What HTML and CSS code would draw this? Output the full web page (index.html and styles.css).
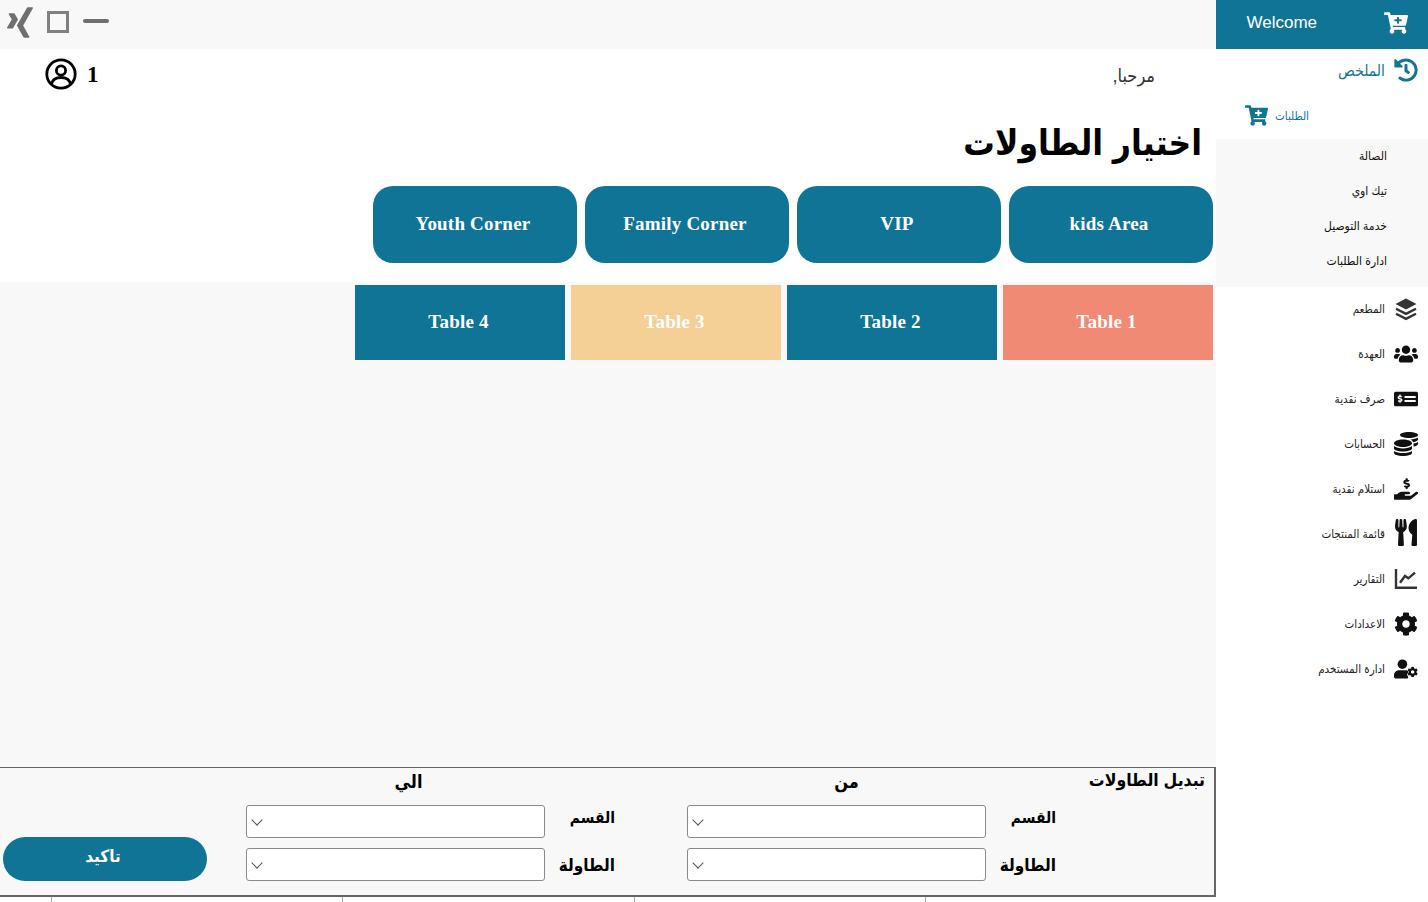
FILE: index.html
```html
<!DOCTYPE html>
<html lang="ar" dir="rtl">
<head>
  <meta charset="UTF-8">
  <meta name="viewport" content="width=device-width, initial-scale=1.0">
  <title>اختيار الطاولات</title>
  <link rel="stylesheet" href="styles.css">
</head>
<body>
  <svg class="sprites" xmlns="http://www.w3.org/2000/svg">
    <symbol id="i-cart" viewBox="0 0 576 512"><path d="M504.717 320H211.572l6.545 32h268.418c15.401 0 26.816 14.301 23.403 29.319l-5.517 24.276C523.112 414.668 536 433.828 536 456c0 31.202-25.519 56.444-56.824 55.994-29.823-.429-54.35-24.631-55.155-54.447-.44-16.287 6.085-31.049 16.803-41.548H231.176C241.553 426.165 248 440.326 248 456c0 31.813-26.528 57.431-58.67 55.938-28.54-1.325-51.751-24.385-53.251-52.917-1.158-22.034 10.436-41.455 28.051-51.586L93.883 64H24C10.745 64 0 53.255 0 40V24C0 10.745 10.745 0 24 0h102.529c11.401 0 21.228 8.021 23.513 19.19L159.208 64H551.99c15.401 0 26.816 14.301 23.403 29.319l-47.273 208C525.637 312.246 515.923 320 504.717 320zM408 168h-48v-40c0-8.837-7.163-16-16-16h-16c-8.837 0-16 7.163-16 16v40h-48c-8.837 0-16 7.163-16 16v16c0 8.837 7.163 16 16 16h48v40c0 8.837 7.163 16 16 16h16c8.837 0 16-7.163 16-16v-40h48c8.837 0 16-7.163 16-16v-16c0-8.837-7.163-16-16-16z"/></symbol>
    <symbol id="i-cog" viewBox="0 0 512 512"><path d="M487.4 315.7l-42.6-24.6c4.3-23.2 4.3-47 0-70.2l42.6-24.6c4.9-2.8 7.1-8.6 5.5-14-11.1-35.6-30-67.8-54.7-94.6-3.8-4.1-10-5.1-14.8-2.3L380.8 110c-17.9-15.4-38.5-27.3-60.8-35.1V25.8c0-5.6-3.9-10.5-9.4-11.7-36.7-8.2-74.3-7.8-109.2 0-5.5 1.2-9.4 6.1-9.4 11.7V75c-22.2 7.9-42.8 19.8-60.8 35.1L88.7 85.5c-4.9-2.8-11-1.9-14.8 2.3-24.7 26.7-43.6 58.9-54.7 94.6-1.7 5.4.6 11.2 5.5 14L67.3 221c-4.3 23.2-4.3 47 0 70.2l-42.6 24.6c-4.9 2.8-7.1 8.6-5.5 14 11.1 35.6 30 67.8 54.7 94.6 3.8 4.1 10 5.1 14.8 2.3l42.6-24.6c17.9 15.4 38.5 27.3 60.8 35.1v49.2c0 5.6 3.9 10.5 9.4 11.7 36.7 8.2 74.3 7.8 109.2 0 5.5-1.2 9.4-6.1 9.4-11.7v-49.2c22.2-7.9 42.8-19.8 60.8-35.1l42.6 24.6c4.9 2.8 11 1.9 14.8-2.3 24.7-26.7 43.6-58.9 54.7-94.6 1.5-5.5-.7-11.3-5.6-14.1zM256 336c-44.1 0-80-35.9-80-80s35.9-80 80-80 80 35.9 80 80-35.9 80-80 80z"/></symbol>
  </svg>

  <div class="shell">
    <aside class="sidebar">
      <div class="side-head">
        <svg class="cart-head"><use href="#i-cart"/></svg>
        <span class="welcome" dir="ltr">Welcome</span>
      </div>

      <div class="side-link side-link-active">
        <svg class="side-icon" viewBox="0 0 512 512"><path d="M504 255.531c.253 136.64-111.18 248.372-247.82 248.468-59.015.042-113.223-20.53-155.822-54.911-11.077-8.94-11.905-25.541-1.839-35.607l11.267-11.267c8.609-8.609 22.353-9.551 31.891-1.984C173.062 425.135 212.781 440 256 440c101.705 0 184-82.311 184-184 0-101.705-82.311-184-184-184-48.814 0-93.149 18.969-126.068 49.932l50.754 50.754c10.08 10.08 2.941 27.314-11.313 27.314H24c-8.837 0-16-7.163-16-16V38.627c0-14.254 17.234-21.393 27.314-11.314l49.372 49.372C129.209 34.136 189.552 8 256 8c136.81 0 247.747 110.78 248 247.531zm-180.912 78.784l9.823-12.63c8.138-10.463 6.253-25.542-4.21-33.679L288 256.349V152c0-13.255-10.745-24-24-24h-16c-13.255 0-24 10.745-24 24v135.651l65.409 50.874c10.463 8.137 25.541 6.253 33.679-4.21z"/></svg>
        <span class="side-text-lg">الملخص</span>
      </div>

      <div class="orders-link">
        <span>الطلبات</span>
        <svg class="orders-cart"><use href="#i-cart"/></svg>
      </div>

      <ul class="sub-menu">
        <li>الصالة</li>
        <li>تيك اوي</li>
        <li>خدمة التوصيل</li>
        <li>ادارة الطلبات</li>
      </ul>

      <nav class="side-nav">
        <div class="side-link">
          <svg class="side-icon layers-icon" viewBox="0 0 24 24"><path class="layer-top" d="M12 1.500L22.500 7 12 12.500 1.500 7z"/><path d="M2 11.800l10 5 10-5M2 16.800l10 5 10-5"/></svg>
          <span>المطعم</span>
        </div>
        <div class="side-link">
          <svg class="side-icon" viewBox="0 0 640 512"><path d="M96 224c35.3 0 64-28.7 64-64s-28.7-64-64-64-64 28.7-64 64 28.7 64 64 64zm448 0c35.3 0 64-28.7 64-64s-28.7-64-64-64-64 28.7-64 64 28.7 64 64 64zm32 32h-64c-17.6 0-33.5 7.1-45.1 18.6 40.3 22.1 68.9 62 75.1 109.4h66c17.7 0 32-14.3 32-32v-32c0-35.3-28.7-64-64-64zm-256 0c61.9 0 112-50.1 112-112S381.9 32 320 32 208 82.1 208 144s50.1 112 112 112zm76.8 32h-8.3c-20.8 10-43.9 16-68.5 16s-47.6-6-68.5-16h-8.3C179.6 288 128 339.6 128 403.2V432c0 26.5 21.5 48 48 48h288c26.5 0 48-21.5 48-48v-28.8c0-63.6-51.6-115.2-115.2-115.2zm-223.7-13.4C161.5 263.1 145.6 256 128 256H64c-35.3 0-64 28.7-64 64v32c0 17.7 14.3 32 32 32h65.9c6.3-47.4 34.9-87.3 75.2-109.4z"/></svg>
          <span>العهدة</span>
        </div>
        <div class="side-link">
          <svg class="side-icon" viewBox="0 0 640 512">
            <rect y="64" width="640" height="384" rx="40"/>
            <path class="money-mark" d="M176 327.88V344c0 4.42-3.58 8-8 8h-16c-4.42 0-8-3.58-8-8v-16.29c-11.29-.58-22.27-4.52-31.37-11.35-3.9-2.93-4.1-8.77-.57-12.14l11.75-11.21c2.77-2.64 6.89-2.76 10.13-.73 3.87 2.42 8.26 3.72 12.82 3.72h28.11c6.5 0 11.8-5.92 11.8-13.19 0-5.95-3.61-11.19-8.77-12.73l-45-13.5c-18.59-5.58-31.58-23.42-31.58-43.39 0-24.52 19.05-44.44 42.67-45.07V152c0-4.42 3.58-8 8-8h16c4.42 0 8 3.58 8 8v16.29c11.29.58 22.27 4.51 31.37 11.35 3.9 2.93 4.1 8.77.57 12.14l-11.75 11.21c-2.77 2.64-6.89 2.76-10.13.73-3.87-2.43-8.26-3.72-12.82-3.72h-28.11c-6.5 0-11.8 5.92-11.8 13.19 0 5.95 3.61 11.19 8.77 12.73l45 13.5c18.59 5.58 31.58 23.42 31.58 43.39 0 24.53-19.05 44.44-42.67 45.07z"/>
            <rect class="money-line" x="280" y="176" width="300" height="56" rx="8"/>
            <rect class="money-line" x="280" y="280" width="300" height="56" rx="8"/>
          </svg>
          <span>صرف نقدية</span>
        </div>
        <div class="side-link">
          <svg class="side-icon" viewBox="0 0 512 512"><path d="M0 405.3V448c0 35.3 86 64 192 64s192-28.7 192-64v-42.7C342.7 434.4 267.2 448 192 448S41.3 434.4 0 405.3zM320 128c106 0 192-28.7 192-64S426 0 320 0 128 28.7 128 64s86 64 192 64zM0 300.4V352c0 35.3 86 64 192 64s192-28.7 192-64v-51.6c-41.3 34-116.9 51.6-192 51.6S41.3 334.4 0 300.4zm416 11c57.3-11.1 96-31.7 96-55.4v-42.7c-23.2 16.4-57.3 27.6-96 34.5v63.6zM192 160C86 160 0 195.8 0 240s86 80 192 80 192-35.8 192-80-86-80-192-80zm219.3 56.3c60-10.8 100.7-32 100.7-56.3v-42.7c-35.5 25.1-96.5 38.6-160.7 41.8 29.5 14.3 51.2 33.5 60 57.2z"/></svg>
          <span>الحسابات</span>
        </div>
        <div class="side-link">
          <svg class="side-icon" viewBox="0 0 576 512"><path d="M271.06,144.3l54.27,14.3a8.59,8.59,0,0,1,6.63,8.1c0,4.6-4.09,8.4-9.12,8.4h-35.6a30,30,0,0,1-11.19-2.2c-5.24-2.2-11.28-1.7-15.3,2l-19,17.5a11.68,11.68,0,0,0-2.25,2.66,11.42,11.42,0,0,0,3.88,15.74,83.77,83.77,0,0,0,34.51,11.5V240c0,8.8,7.83,16,17.37,16h17.37c9.55,0,17.38-7.2,17.38-16V222.4c32.93-3.6,57.84-31,53.5-63-3.15-23-22.46-41.3-46.56-47.7L282.68,97.4a8.59,8.59,0,0,1-6.63-8.1c0-4.6,4.09-8.4,9.12-8.4h35.6A30,30,0,0,1,332,83.1c5.23,2.2,11.28,1.7,15.3-2l19-17.5A11.31,11.31,0,0,0,368.47,61a11.43,11.43,0,0,0-3.84-15.78,83.82,83.82,0,0,0-34.52-11.5V16c0-8.8-7.82-16-17.37-16H295.37C285.82,0,278,7.2,278,16V33.6c-32.89,3.6-57.85,31-53.51,63C227.63,119.6,247,137.9,271.06,144.3ZM565.27,328.1c-11.8-10.7-30.2-10-42.6,0L430.27,402a63.64,63.64,0,0,1-40,14H272a16,16,0,0,1,0-32h78.29c15.9,0,30.71-10.9,33.25-26.6a31.2,31.2,0,0,0,.46-5.46A32,32,0,0,0,352,320H192a117.66,117.66,0,0,0-74.1,26.29L71.4,384H16A16,16,0,0,0,0,400v96a16,16,0,0,0,16,16H372.77a64,64,0,0,0,40-14L564,377a32,32,0,0,0,1.28-48.9Z"/></svg>
          <span>استلام نقدية</span>
        </div>
        <div class="side-link">
          <svg class="side-icon utensils-icon" viewBox="0 0 416 512"><path d="M207.9 15.2c.8 4.7 16.1 94.5 16.1 128.8 0 52.3-27.8 89.6-68.9 104.6L168 486.7c.7 13.7-10.2 25.3-24 25.3H80c-13.7 0-24.7-11.5-24-25.3l12.9-238.1C27.7 233.6 0 196.2 0 144 0 109.6 15.3 19.9 16.1 15.2 19.3-5.1 61.4-5.4 64 16.3v141.2c1.3 3.4 15.1 3.2 16 0 1.4-25.3 7.9-139.2 8-141.8 3.3-20.8 44.7-20.8 47.9 0 .2 2.7 6.6 116.5 8 141.8.9 3.2 14.8 3.4 16 0V16.3c2.6-21.6 44.8-21.4 48-1.1zm119.2 285.7l-15 185.1c-1.2 14 9.9 26 23.9 26h56c13.3 0 24-10.7 24-24V24c0-13.2-10.7-24-24-24-82.5 0-221.4 178.5-64.9 300.9z"/></svg>
          <span>قائمة المنتجات</span>
        </div>
        <div class="side-link">
          <svg class="side-icon chart-icon" viewBox="0 0 24 24"><path d="M2 2v18.700h21"/><path d="M6 15.700l5-6.700 3.300 2.300 6.700-5.600"/></svg>
          <span>التقارير</span>
        </div>
        <div class="side-link">
          <svg class="side-icon"><use href="#i-cog"/></svg>
          <span>الاعدادات</span>
        </div>
        <div class="side-link">
          <svg class="side-icon" viewBox="0 0 640 512">
            <circle cx="224" cy="128" r="128"/>
            <path d="M134 288h180c30 0 60 10 60 30v40c-30 30-30 70 0 100v30c0 12-8 24-24 24H48c-26 0-48-22-48-48v-41.600C0 348 60 288 134 288z"/>
            <svg x="352" y="192" width="288" height="288" viewBox="0 0 512 512"><use href="#i-cog"/></svg>
          </svg>
          <span>ادارة المستخدم</span>
        </div>
      </nav>
    </aside>

    <main class="content">
      <div class="top-bar" dir="ltr">
        <svg class="xing-icon" viewBox="0 0 384 512"><path d="M162.7 210c-1.8 3.3-25.2 44.4-70.1 123.5-4.9 8.3-10.8 12.5-17.7 12.5H9.8c-7.7 0-12.1-7.5-8.5-14.4l69-121.3c.2 0 .2-.1 0-.3l-43.9-75.6c-4.3-7.8.3-14.1 8.5-14.1H100c7.3 0 13.3 4.1 18 12.2l44.7 77.500zM382.600 46.100l-144 253v.3L330.200 466c3.900 7.100.2 14.100-8.500 14.100h-65.200c-7.600 0-13.600-4-18-12.200l-92.400-168.500c3.300-5.800 51.500-90.800 144.800-255.200 4.600-8.100 10.400-12.200 17.500-12.200h65.700c8 0 12.300 6.700 8.500 14.100z"/></svg>
        <span class="win-square"></span>
        <span class="win-minus"></span>
      </div>

      <section class="intro">
        <div class="greeting-row">
          <span class="greeting">مرحبا,</span>
          <div class="user-box" dir="ltr">
            <svg class="user-icon" viewBox="0 0 32 32">
              <circle cx="16" cy="16" r="14.200"/>
              <circle cx="16" cy="12.500" r="4.600"/>
              <path d="M6.500 26c1-4.500 5-6.500 9.500-6.500s8.500 2 9.500 6.500"/>
            </svg>
            <strong class="user-id">1</strong>
          </div>
        </div>
        <h1 class="page-title">اختيار الطاولات</h1>
        <div class="categories" dir="rtl">
          <button type="button" class="category">kids Area</button>
          <button type="button" class="category">VIP</button>
          <button type="button" class="category">Family Corner</button>
          <button type="button" class="category">Youth Corner</button>
        </div>
      </section>

      <section class="tables">
        <div class="table-card table-busy">Table 1</div>
        <div class="table-card">Table 2</div>
        <div class="table-card table-held">Table 3</div>
        <div class="table-card">Table 4</div>
      </section>

      <section class="swap-panel">
        <div class="swap-title">تبديل الطاولات</div>

        <div class="swap-group">
          <div class="swap-heading">من</div>
          <label class="swap-row">
            <span class="label-section">القسم</span>
            <span class="select-wrap"><select></select></span>
          </label>
          <label class="swap-row">
            <span class="label-table">الطاولة</span>
            <span class="select-wrap"><select></select></span>
          </label>
        </div>

        <div class="swap-group swap-group-to">
          <div class="swap-heading">الي</div>
          <label class="swap-row">
            <span class="label-section">القسم</span>
            <span class="select-wrap"><select></select></span>
          </label>
          <label class="swap-row">
            <span class="label-table">الطاولة</span>
            <span class="select-wrap"><select></select></span>
          </label>
        </div>

        <button type="button" class="confirm-btn">تاكيد</button>
      </section>

      <div class="grid-strip">
        <span></span><span></span><span></span><span></span>
      </div>
    </main>
  </div>
</body>
</html>
```

FILE: styles.css
```css
* {
  box-sizing: border-box;
}

html, body {
  margin: 0;
  padding: 0;
  height: 902px;
  overflow: hidden;
}

body {
  font-family: "Liberation Sans", "DejaVu Sans Condensed", "DejaVu Sans", sans-serif;
  background-color: #fff;
  color: #000;
}

.sprites {
  display: none;
}

.shell {
  display: flex;
  height: 902px;
}

/* sidebar */
.sidebar {
  width: 212px;
  flex-shrink: 0;
  background-color: #fff;
}

.side-head {
  height: 49px;
  background-color: #107496;
  color: #fff;
  display: flex;
  align-items: center;
  padding: 0 20px 4px 0;
}

.cart-head {
  width: 24px;
  height: 22px;
  fill: #fff;
}

.welcome {
  margin-right: 67px;
  font-size: 17px;
}

.side-link {
  height: 45px;
  display: flex;
  align-items: center;
  gap: 9px;
  padding-right: 10px;
  font-size: 11.5px;
  color: #222;
}

.side-nav {
  margin-top: -1px;
}

.side-icon {
  width: 24px;
  height: 24px;
  fill: #111;
  flex-shrink: 0;
}

.layers-icon {
  fill: none;
  stroke: #333;
  stroke-width: 2.400;
}

.layer-top {
  fill: #333;
  stroke: none;
}

.money-mark {
  fill: #fff;
  stroke: #fff;
  stroke-width: 12;
}

.money-line {
  fill: #fff;
}

.utensils-icon {
  height: 27px;
  margin-top: -2px;
}

.chart-icon {
  fill: none;
  stroke: #333;
  stroke-width: 2.400;
}

.side-link-active {
  color: #107496;
  height: 44px;
  margin-top: -1px;
}

.side-link-active .side-icon {
  fill: #107496;
}

.side-text-lg {
  font-size: 15.5px;
  margin-top: 2px;
}

.orders-link {
  height: 47px;
  display: flex;
  align-items: center;
  justify-content: flex-end;
  gap: 7px;
  padding-left: 29px;
  font-size: 11.5px;
  color: #107496;
}

.orders-cart {
  width: 23px;
  height: 21px;
  fill: #107496;
}

.sub-menu {
  list-style: none;
  margin: 0;
  padding: 0 41px 8px 0;
  background-color: #f8f8f8;
  font-size: 12px;
  color: #111;
}

.sub-menu li {
  height: 35px;
  line-height: 35px;
}

/* main column */
.content {
  width: 1216px;
  display: flex;
  flex-direction: column;
}

.top-bar {
  height: 49px;
  background-color: #f8f8f8;
  display: flex;
  align-items: center;
  padding: 0 0 5px 7px;
}

.xing-icon {
  width: 26px;
  height: 35px;
  fill: #6f6f6f;
}

.win-square {
  width: 22px;
  height: 22px;
  border: 3px solid #808080;
  margin-left: 14px;
}

.win-minus {
  width: 26px;
  height: 4px;
  border-radius: 2px;
  background-color: #6f6f6f;
  margin-left: 14px;
  margin-bottom: 3px;
}

.intro {
  height: 233px;
}

.greeting-row {
  height: 50px;
  display: flex;
  justify-content: space-between;
  align-items: center;
  padding: 0 61px 0 45px;
}

.greeting {
  font-size: 18px;
  color: #333;
  margin-top: 3px;
}

.user-box {
  display: flex;
  align-items: center;
  gap: 10px;
}

.user-icon {
  width: 32px;
  height: 32px;
  fill: none;
  stroke: #000;
  stroke-width: 2.800;
}

.user-id {
  font-family: "Liberation Serif", serif;
  font-size: 23px;
  margin-top: 1px;
}

.page-title {
  margin: 0;
  height: 87px;
  padding: 16px 14px 0 0;
  font-size: 35px;
  line-height: 56px;
  font-weight: bold;
}

.categories {
  display: flex;
  gap: 8px;
  padding-right: 3px;
}

.category {
  width: 204px;
  height: 77px;
  padding: 0 4px 2px 0;
  border: none;
  border-radius: 20px;
  background-color: #107496;
  color: #fff;
  font-family: "Liberation Serif", serif;
  font-size: 19px;
  font-weight: bold;
  letter-spacing: 0.2px;
  cursor: pointer;
}

.tables {
  flex: 1;
  background-color: #f8f8f8;
  display: flex;
  align-items: flex-start;
  gap: 6px;
  padding: 3px 3px 0 0;
}

.table-card {
  width: 210px;
  height: 75px;
  padding: 0 3px 2px 0;
  background-color: #107496;
  color: #fff;
  display: flex;
  align-items: center;
  justify-content: center;
  font-family: "Liberation Serif", serif;
  font-size: 19px;
  font-weight: bold;
  letter-spacing: 0.2px;
}

.table-busy {
  background-color: #f08a75;
}

.table-held {
  background-color: #f4d096;
}

/* swap tables panel */
.swap-panel {
  height: 130px;
  flex-shrink: 0;
  display: grid;
  grid-template-columns: 158px 369px 72px 369px 39px 204px;
  padding-bottom: 14px;
  background-color: #f8f8f8;
  border-top: 1px solid #666;
  border-bottom: 2px solid #666;
  border-right: 2px solid #666;
}

.swap-title {
  padding-right: 9px;
  font-size: 17.500px;
  font-weight: bold;
  line-height: 24px;
}

.swap-group {
  grid-column: 2;
  display: flex;
  flex-direction: column;
  gap: 10px;
}

.swap-group-to {
  grid-column: 4;
}

.swap-heading {
  height: 27px;
  padding: 2px 50px 0 0;
  text-align: center;
  font-size: 18px;
  font-weight: bold;
  line-height: 24px;
}

.swap-group-to .swap-heading {
  padding-right: 44px;
}

.swap-row {
  display: flex;
  align-items: center;
  height: 33px;
  font-size: 17px;
  font-weight: bold;
}

.swap-row > span:first-child {
  width: 70px;
}

.label-section {
  font-size: 15.500px;
  margin-top: -8px;
}

.label-table {
  margin-top: 2px;
}

.select-wrap {
  position: relative;
  display: block;
  width: 299px;
  height: 33px;
}

/* thin chevron drawn over the native select */
.select-wrap::after {
  content: "";
  position: absolute;
  left: 7px;
  top: 11px;
  width: 7px;
  height: 7px;
  border-right: 1px solid #555;
  border-bottom: 1px solid #555;
  transform: rotate(45deg);
  pointer-events: none;
}

.select-wrap select {
  width: 100%;
  height: 33px;
  appearance: none;
  border: 1px solid #8a8a8a;
  border-radius: 3px;
  background-color: #fff;
}

.confirm-btn {
  grid-column: 6;
  align-self: end;
  height: 44px;
  padding: 0 4px 6px 0;
  border: none;
  border-radius: 22px;
  background-color: #107496;
  color: #fff;
  font-family: "Liberation Sans", "DejaVu Sans Condensed", "DejaVu Sans", sans-serif;
  font-size: 17px;
  font-weight: bold;
  cursor: pointer;
}

.grid-strip {
  height: 5px;
  display: flex;
  flex-shrink: 0;
}

.grid-strip span {
  width: 291.25px;
  border-left: 1px solid #aaa;
}
```
